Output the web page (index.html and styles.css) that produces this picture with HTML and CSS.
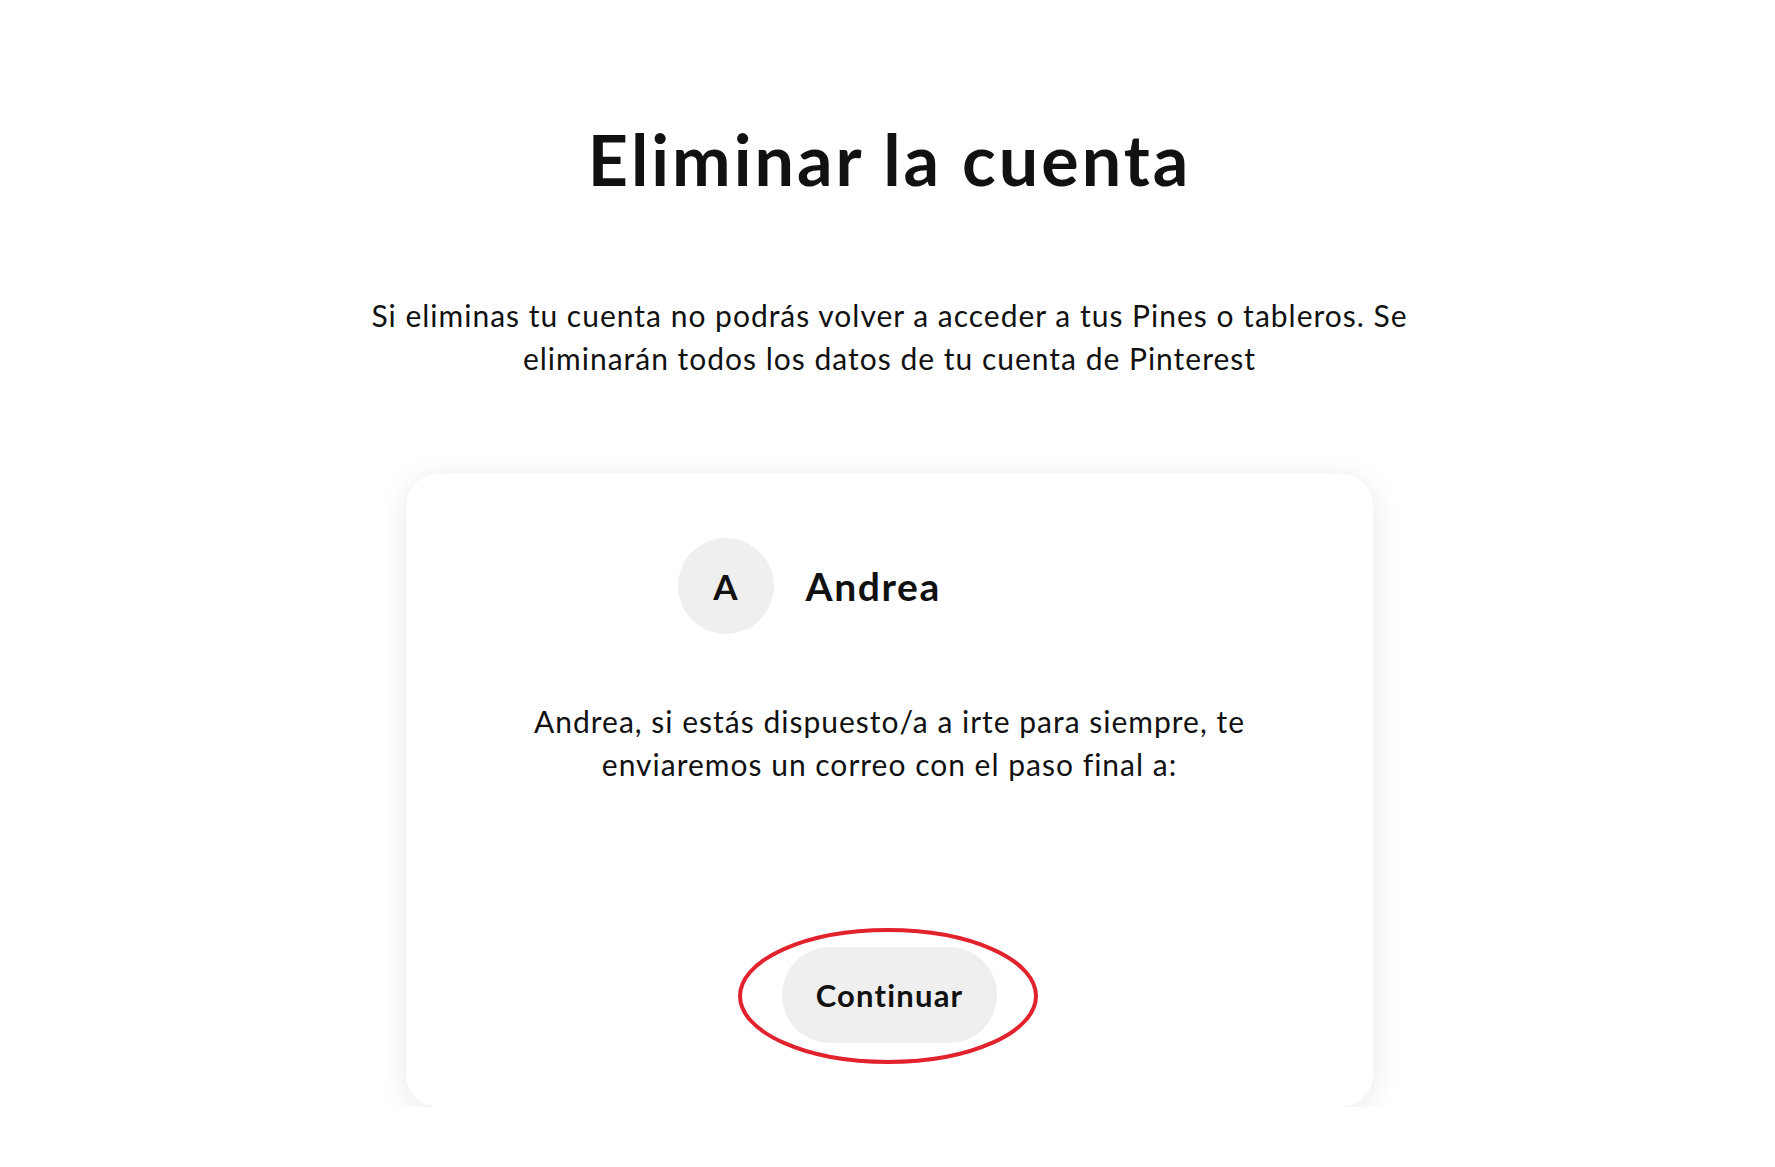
FILE: index.html
```html
<!DOCTYPE html>
<html lang="es">
<head>
    <meta charset="UTF-8">
    <meta name="viewport" content="width=device-width, initial-scale=1.0">
    <title>Eliminar la cuenta</title>
    <link rel="stylesheet" href="styles.css">
</head>

<body>

    <main class="page">
        <h1>Eliminar la cuenta</h1>

        <p class="intro">Si eliminas tu cuenta no podrás volver a acceder a tus Pines o tableros. Se eliminarán todos los datos de tu cuenta de Pinterest</p>

        <div class="card">
            <div class="user">
                <div class="avatar">A</div>
                <span class="name">Andrea</span>
            </div>

            <p class="message">Andrea, si estás dispuesto/a a irte para siempre, te enviaremos un correo con el paso final a:</p>
            <p class="email"></p>

            <div class="actions">
                <button class="btn">Continuar</button>
                <svg class="circle" width="302" height="138" viewBox="0 0 302 138">
                    <ellipse cx="151" cy="69" rx="148" ry="66" fill="none" stroke="#e2222c" stroke-width="4"/>
                </svg>
            </div>
        </div>
    </main>

</body>
</html>
```

FILE: styles.css
```css
/* Corps de la page */
body {
    font-family: 'Lato', 'Noto Sans', sans-serif;
    margin: 0;
    padding: 0 0 0 4px;
    color: #111111;
    background: #ffffff;
}

.page {
    display: flex;
    flex-direction: column;
    align-items: center;
}

h1 {
    font-size: 70px;
    line-height: 84px;
    font-weight: 700;
    letter-spacing: 3px;
    margin: 117px 0 0;
}

.intro {
    font-size: 30px;
    line-height: 43px;
    letter-spacing: 1px;
    text-align: center;
    max-width: 1100px;
    margin: 93px 0 0;
}

/* Carte */
.card {
    width: 967px;
    box-sizing: border-box;
    margin-top: 94px;
    padding: 64px 0;
    background: #ffffff;
    border-radius: 32px;
    box-shadow: 0 4px 30px rgba(0, 0, 0, 0.09);
    display: flex;
    flex-direction: column;
    align-items: center;
}

.user {
    width: 424px;
    display: flex;
    align-items: center;
    gap: 32px;
}

    .avatar {
        width: 96px;
        height: 96px;
        border-radius: 50%;
        background: #efefef;
        display: flex;
        align-items: center;
        justify-content: center;
        font-size: 35px;
        font-weight: 700;
    }

    .name {
        font-size: 39px;
        font-weight: 700;
        letter-spacing: 1.6px;
    }

.message {
    font-size: 30px;
    line-height: 43px;
    letter-spacing: 1px;
    text-align: center;
    max-width: 740px;
    margin: 66px 0 0;
}

.email {
    height: 43px;
    margin: 0;
}

.actions {
    position: relative;
    margin-top: 118px;
}

.btn {
    font-family: inherit;
    font-size: 31px;
    font-weight: 700;
    letter-spacing: 1.2px;
    color: #111111;
    background: #efefef;
    border: none;
    border-radius: 48px;
    height: 96px;
    padding: 0 34px;
    cursor: pointer;
}

/* Annotation rouge */
.circle {
    position: absolute;
    left: 50%;
    top: -20px;
    margin-left: -152px;
    pointer-events: none;
}
```
